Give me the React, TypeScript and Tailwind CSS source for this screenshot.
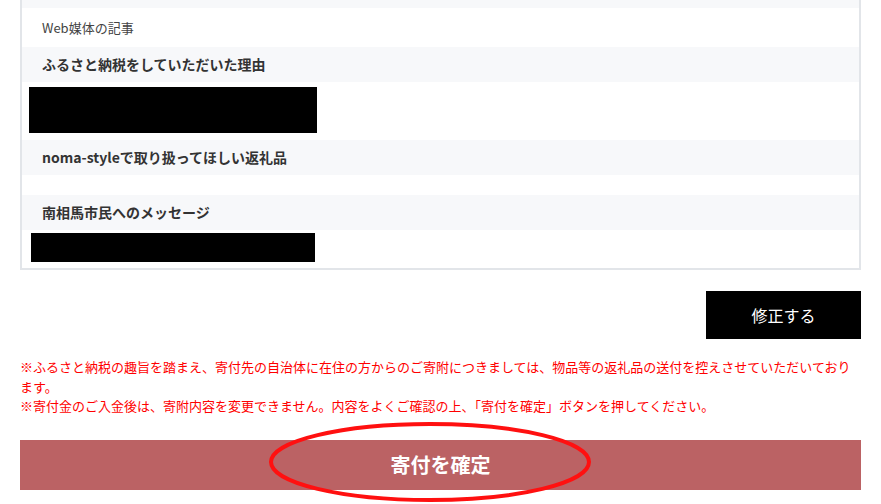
export default function App() {
  return (
    <div className="w-[881px] h-[504px] overflow-hidden bg-white px-5 text-[#333] font-['Noto_Sans_CJK_JP','Noto_Sans',sans-serif]">
      {/* answer table (scrolled, top cut off) */}
      <div className="border-x-2 border-b-2 border-[#e2e5e9]">
        <div className="h-2 bg-[#f7f8fa]" />
        <div className="h-[39px] flex items-center pl-5 text-[13px] text-[#444]">Web媒体の記事</div>
        <div className="h-[35px] flex items-center pl-5 bg-[#f7f8fa] text-[14px] font-bold">
          ふるさと納税をしていただいた理由
        </div>
        <div className="h-[58px] pl-[7px] pt-[5px]">
          <div className="w-[288px] h-[46px] bg-black" />
        </div>
        <div className="h-[35px] flex items-center pl-5 bg-[#f7f8fa] text-[14px] font-bold">
          noma-styleで取り扱ってほしい返礼品
        </div>
        <div className="h-[20px]" />
        <div className="h-[35px] flex items-center pl-5 bg-[#f7f8fa] text-[14px] font-bold">
          南相馬市民へのメッセージ
        </div>
        <div className="h-[38px] pl-[9px] pt-[3px]">
          <div className="w-[284px] h-[29px] bg-black" />
        </div>
      </div>

      <div className="mt-[21px] flex justify-end">
        <button type="button" className="w-[155px] h-[48px] bg-black text-white text-[16px]">
          修正する
        </button>
      </div>

      <div className="mt-[18px] text-[13px] leading-[19.5px] text-[#ff0000]">
        <p>※ふるさと納税の趣旨を踏まえ、寄付先の自治体に在住の方からのご寄附につきましては、物品等の返礼品の送付を控えさせていただいております。</p>
        <p>※寄付金のご入金後は、寄附内容を変更できません。内容をよくご確認の上、「寄付を確定」ボタンを押してください。</p>
      </div>

      <div className="relative mt-[24px]">
        <button type="button" className="w-full h-[50px] bg-[#bb6264] text-white text-[20px] font-bold">
          寄付を確定
        </button>
        {/* red annotation circle */}
        <svg className="absolute left-[-20px] top-[-18px] pointer-events-none" width="881" height="90" viewBox="0 0 881 90">
          <ellipse cx="430" cy="40" rx="159" ry="38" fill="none" stroke="#ff1010" strokeWidth="4" />
        </svg>
      </div>
    </div>
  );
}
